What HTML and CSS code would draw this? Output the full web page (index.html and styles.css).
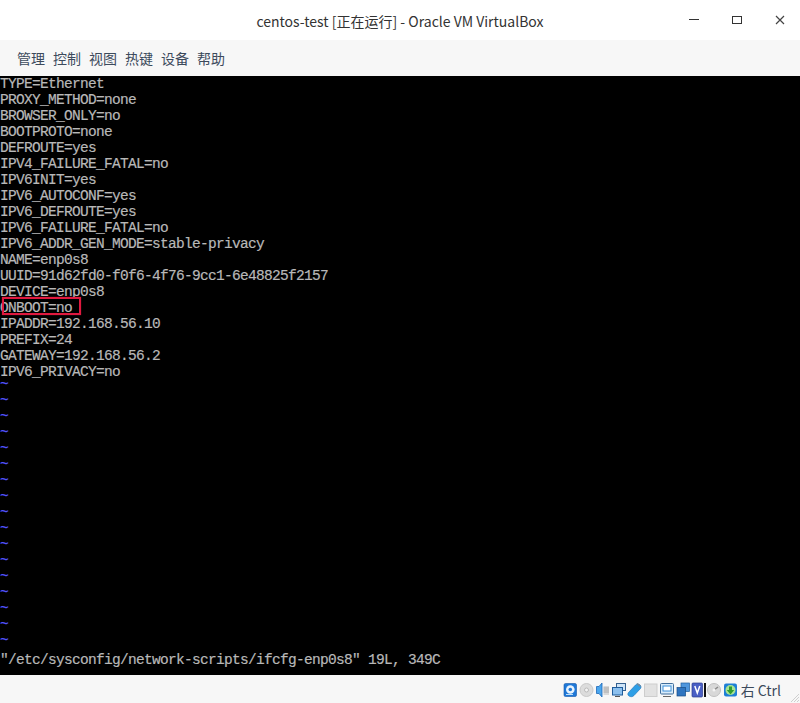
FILE: index.html
```html
<!DOCTYPE html>
<html lang="zh">
<head>
<meta charset="utf-8">
<title>centos-test</title>
<link rel="stylesheet" href="styles.css">
</head>
<body>
<div class="window">
  <header class="titlebar">
    <div class="title">centos-test [正在运行] - Oracle VM VirtualBox</div>
    <div class="controls">
      <svg class="ctl" viewBox="0 0 12 12"><path d="M1 5.5H11" stroke="#333" stroke-width="1" fill="none"/></svg>
      <svg class="ctl" viewBox="0 0 12 12"><rect x="1.5" y="2.5" width="9" height="7" stroke="#333" stroke-width="1" fill="none"/></svg>
      <svg class="ctl" viewBox="0 0 12 12"><path d="M2 2L10 10M10 2L2 10" stroke="#444" stroke-width="1.2" fill="none"/></svg>
    </div>
  </header>
  <nav class="menubar">
    <span>管理</span><span>控制</span><span>视图</span><span>热键</span><span>设备</span><span>帮助</span>
  </nav>
  <main class="screen">
<pre class="term">TYPE=Ethernet
PROXY_METHOD=none
BROWSER_ONLY=no
BOOTPROTO=none
DEFROUTE=yes
IPV4_FAILURE_FATAL=no
IPV6INIT=yes
IPV6_AUTOCONF=yes
IPV6_DEFROUTE=yes
IPV6_FAILURE_FATAL=no
IPV6_ADDR_GEN_MODE=stable-privacy
NAME=enp0s8
UUID=91d62fd0-f0f6-4f76-9cc1-6e48825f2157
DEVICE=enp0s8
ONBOOT=no
IPADDR=192.168.56.10
PREFIX=24
GATEWAY=192.168.56.2
IPV6_PRIVACY=no
<span class="tilde">~
~
~
~
~
~
~
~
~
~
~
~
~
~
~
~
~</span>
"/etc/sysconfig/network-scripts/ifcfg-enp0s8" 19L, 349C</pre>
    <div class="mark"></div>
  </main>
  <footer class="statusbar">
    <svg class="ico" viewBox="0 0 16 16"><rect x="1" y="1.500" width="12.500" height="13" rx="1.500" fill="#1e78d8" stroke="#1558a8" stroke-width=".6"/><circle cx="7.300" cy="7.500" r="4.300" fill="#e8f3fd"/><circle cx="7.300" cy="7.500" r="1.800" fill="#1e78d8"/><path d="M3 12.500h7" stroke="#bfe0fa"/></svg>
    <svg class="ico" viewBox="0 0 16 16"><circle cx="7.500" cy="8" r="6.500" fill="#dcdcdc" stroke="#c8c8c8"/><circle cx="7.500" cy="8" r="2" fill="#f4f4f4" stroke="#bbb"/></svg>
    <svg class="ico" viewBox="0 0 16 16"><path d="M1.500 4.500h2.500l3-3.500v14l-3-3.500H1.500z" fill="#4aa6ee" stroke="#1d68b8" stroke-width=".8"/><path d="M8.500 4h5.500v9H8.500z" fill="#d8d8d8"/><path d="M8.500 6h5.500M8.500 8h5.500M8.500 10h5.500" stroke="#a8a8a8"/></svg>
    <svg class="ico" viewBox="0 0 16 16"><rect x="5.500" y="1.500" width="9" height="7" fill="#cfe4f7" stroke="#34608f"/><rect x="1.500" y="5.500" width="10" height="7.500" fill="#8cc0ee" stroke="#1f5c9c"/><path d="M4 14.500h5" stroke="#555"/></svg>
    <svg class="ico" viewBox="0 0 16 16"><path d="M1.500 10.500L8.500 3c1-1 2.500-1.500 4-.5s2 2.500 1 4L7 13.500c-1.500 1.500-3.500 1.500-5 .5s-1.500-2.200-.5-3.500z" fill="#2e9fe6" stroke="#1a6fb5" stroke-width=".6"/><path d="M10 1.500l3.500 3" stroke="#7a8a9a" stroke-width="1.500"/></svg>
    <svg class="ico" viewBox="0 0 16 16"><rect x="1.500" y="2" width="12.500" height="12.500" fill="#e2e2e2" stroke="#cdcdcd"/></svg>
    <svg class="ico" viewBox="0 0 16 16"><rect x="1.500" y="1.500" width="13" height="10.500" rx="1" fill="#d8ebfa" stroke="#3f6d9b"/><rect x="4" y="4" width="8" height="5" fill="#fff" stroke="#3b8ed8"/><path d="M4 14.500h8" stroke="#666"/></svg>
    <svg class="ico" viewBox="0 0 16 16"><rect x="6" y="1" width="8.500" height="8.500" fill="#4e96dd" stroke="#1e5ea0" stroke-width=".7"/><rect x="2" y="5.500" width="8.500" height="8.500" fill="#2e74c0" stroke="#174a85" stroke-width=".7"/></svg>
    <svg class="ico vt" viewBox="0 0 13 16"><rect x="1" y="1" width="10.500" height="14" rx="1" fill="#4a5fc4" stroke="#2d3c90" stroke-width=".7"/><path d="M3.800 4l2.500 7 2.500-7" stroke="#fff" stroke-width="1.500" fill="none"/></svg>
    <div class="sep"></div>
    <svg class="ico" viewBox="0 0 16 16"><circle cx="8" cy="8" r="6.500" fill="#d8d8d8" stroke="#c0c0c0"/><path d="M8 8l4-3" stroke="#8a8a8a" stroke-width="1.500"/><circle cx="8" cy="8" r="1.500" fill="#f3f3f3"/></svg>
    <svg class="ico last" viewBox="0 0 16 16"><rect x="1" y="1.500" width="13" height="13" rx="2" fill="#1e7fd6"/><circle cx="7.500" cy="8" r="5" fill="#a8e492"/><path d="M7.500 12.500L3.800 8H6V4.500h3V8h2.200z" fill="#2f9e2f"/></svg>
    <span class="hostkey">右 Ctrl</span>
    <svg class="grip" viewBox="0 0 12 12"><path d="M11 3L3 11M11 6L6 11M11 9L9 11" stroke="#cfcfcf" fill="none"/></svg>
  </footer>
</div>
</body>
</html>
```
FILE: styles.css
```css
* { box-sizing: border-box; }
html, body { margin: 0; padding: 0; }
body { width: 800px; height: 703px; overflow: hidden; background: #f7f7f7; font-family: "Noto Sans CJK SC", "Noto Sans", sans-serif; }
.window { display: flex; flex-direction: column; height: 703px; }
.titlebar { height: 40px; flex: none; background: #fff; display: flex; align-items: center; justify-content: center; position: relative; }
.title { font-size: 14px; color: #333; padding-top: 1px; }
.controls { position: absolute; right: 0; top: 0; height: 40px; display: flex; align-items: center; }
.ctl { width: 12px; height: 12px; margin: 0 0 0 31px; }
.controls .ctl:last-child { margin-right: 14px; }
.menubar { height: 36px; flex: none; background: #f7f7f7; display: flex; align-items: center; gap: 8px; padding-left: 17px; font-size: 14px; color: #3c4a5c; }
.screen { height: 599px; flex: none; background: #000; position: relative; overflow: hidden; }
.term { margin: 0; font-family: "Liberation Mono", monospace; font-size: 14.5px; letter-spacing: -0.702px; line-height: 16px; color: #b8b8b8; -webkit-text-stroke: 0.2px #b8b8b8; }
.tilde { color: #5555ff; -webkit-text-stroke: 0.25px #5555ff; line-height: 0; vertical-align: 4px; }
.mark { position: absolute; left: 2px; top: 221px; width: 79px; height: 18px; border: 2px solid #e0193f; box-shadow: 0 0 1px rgba(224, 25, 63, 0.7); }
.statusbar { height: 28px; flex: none; background: #f7f7f7; display: flex; align-items: center; justify-content: flex-end; padding-right: 19px; padding-top: 2px; position: relative; }
.ico { width: 16px; height: 16px; flex: none; }
.ico.vt { width: 13px; }
.ico.last { margin-left: 1px; }
.sep { width: 2px; height: 14px; background: #111; flex: none; }
.hostkey { font-size: 14px; color: #3c4a5c; margin-left: 2px; }
.grip { position: absolute; right: 0; bottom: 0; width: 12px; height: 12px; }
```
